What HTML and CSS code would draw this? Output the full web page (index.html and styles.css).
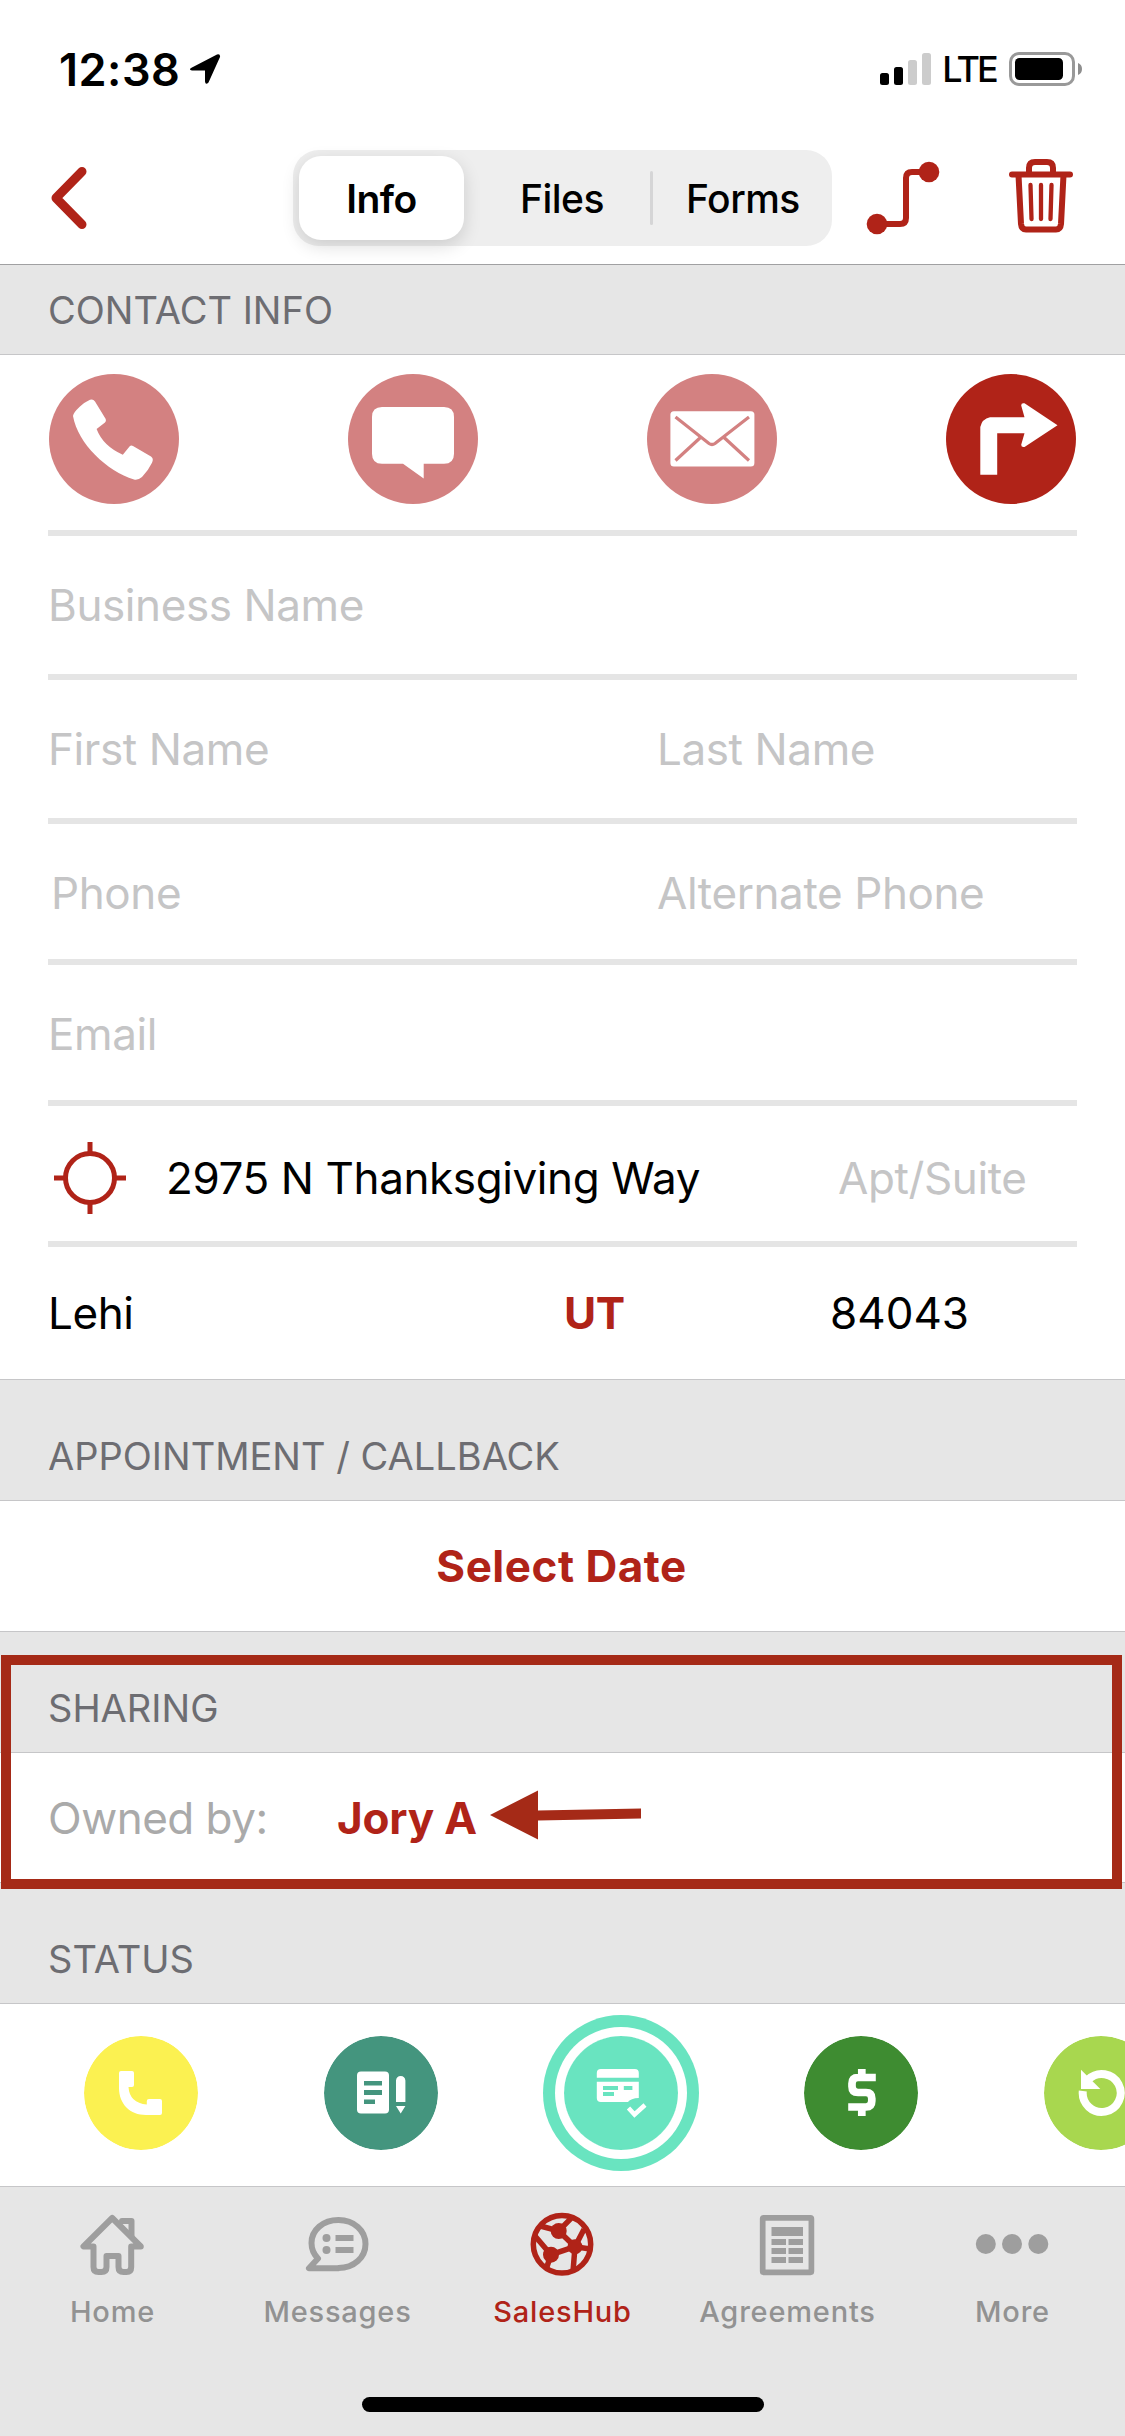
FILE: index.html
```html
<!DOCTYPE html>
<html lang="en">
<head>
<meta charset="utf-8">
<title>Contact</title>
<link rel="stylesheet" href="styles.css">
</head>
<body>
<div class="screen">
  <header class="top">
    <div class="statusbar">
      <div class="clock">
        <span class="time">12:38</span>
        <svg class="location" width="32" height="32" viewBox="0 0 32 32"><path d="M2 15 28 1.500Q31.500 0.500 31 4L19.500 29.500Q16.500 32.500 16 28.500V17.500L3 17.500Q-0.500 16.800 2 15Z"/></svg>
      </div>
      <div class="signals">
        <svg class="bars" width="52" height="34" viewBox="0 0 52 34"><rect x="0" y="21" width="9" height="12" rx="2.500"/><rect x="14" y="15" width="9" height="18" rx="2.500"/><g fill="#ccc"><rect x="28" y="8" width="9" height="25" rx="2.500"/><rect x="42" y="1" width="9" height="32" rx="2.500"/></g></svg>
        <span class="lte">LTE</span>
        <svg width="74" height="34" viewBox="0 0 74 34"><rect x="1.500" y="1.500" width="63" height="31" rx="8.500" fill="none" stroke="#999" stroke-width="3"/><rect x="6" y="6" width="48" height="22" rx="4.500"/><path d="M69 11a6.500 6.500 0 0 1 0 12z" fill="#8e8e8e"/></svg>
      </div>
    </div>
    <nav class="navbar">
      <svg class="back" width="38" height="64" viewBox="0 0 38 64"><path d="M32 5.500 6 32 32 58.500" fill="none" stroke="#b02318" stroke-width="9" stroke-linecap="round" stroke-linejoin="round"/></svg>
      <div class="segments">
        <span class="segment selected">Info</span>
        <span class="segment">Files</span>
        <span class="segment last">Forms</span>
      </div>
      <svg class="route" width="74" height="74" viewBox="0 0 74 74"><path d="M11 63H34Q40 63 40 57V17Q40 11 46 11H63" fill="none" stroke="#b02318" stroke-width="6"/><circle cx="11" cy="63" r="10.300"/><circle cx="63" cy="11" r="10.300"/></svg>
      <svg class="trash" width="64" height="74" viewBox="0 0 64 74" fill="none" stroke="#b02318" stroke-width="6" stroke-linecap="round" stroke-linejoin="round"><path d="M3 15.500H61M20 15V9Q20 3 26 3H38Q44 3 44 9V15"/><path d="M9.500 16 12 65Q12.500 70.500 17 70.500H47Q51.500 70.500 52 65L54.500 16"/><path stroke-width="4.300" d="M21.500 26 22.500 60M32 26V60M42.500 26 41.500 60"/></svg>
    </nav>
  </header>

  <h2 class="heading first">CONTACT INFO</h2>
  <section class="panel contact">
    <div class="actions">
      <svg class="dim" viewBox="0 0 130 130"><circle cx="65" cy="65" r="65"/><path fill="#fff" d="M24 42Q24 39 30.700 32.700 36 28 41 25.800 44 24.500 46 27.500L56.700 45Q57.500 47 56 48.500L47.600 55Q54 72 73.800 80.700L80.500 72.500Q82 71 84 72L102 82.500Q105 84.500 103 88.700 99 97 93 103 89 106.500 85 105.500C58 97 29 70 24 42Z"/></svg>
      <svg class="dim" viewBox="0 0 130 130"><circle cx="65" cy="65" r="65"/><path fill="#fff" d="M34 33H96Q106 33 106 43V79.700Q106 89.700 96 89.700H75.700V104.500L55 89.700H34Q24 89.700 24 79.700V43Q24 33 34 33Z"/></svg>
      <svg class="dim" viewBox="0 0 130 130"><circle cx="65" cy="65" r="65"/><rect x="23.400" y="37.200" width="84" height="55.300" rx="3.500" fill="#fff"/><path fill="none" stroke="#d38181" stroke-width="3.200" d="M28.500 43 62 69.500Q65 71.500 68 69.500L102 43M53.200 63.700 28.500 86.500M77.300 63.700 102 86.500"/></svg>
      <svg class="solid" viewBox="0 0 130 130"><circle cx="65" cy="65" r="65"/><path fill="#fff" d="M34.300 100.700V53Q36 45 44 43.300H78.500L75.200 31.500Q75.200 28.500 78.500 29.300L111.500 51.300 78.500 72.900Q75.200 73.500 75.200 70.700L78.500 59.300H51.200V100.700Z"/></svg>
    </div>
    <div class="row"><span>Business Name</span></div>
    <div class="row split"><span>First Name</span><span>Last Name</span></div>
    <div class="row short split phone"><span class="indent">Phone</span><span>Alternate Phone</span></div>
    <div class="row short email"><span>Email</span></div>
    <div class="row short address">
      <svg width="84" height="72" viewBox="0 0 84 72" fill="none" stroke="#b02318" stroke-width="5"><circle cx="42" cy="36" r="24.500"/><path d="M42 0V12M42 60V72M6 36H18M66 36H78"/></svg>
      <span class="value street">2975 N Thanksgiving Way</span><span class="apt">Apt/Suite</span>
    </div>
    <div class="row city"><span class="value">Lehi</span><span class="state">UT</span><span class="value zip">84043</span></div>
  </section>

  <h2 class="heading">APPOINTMENT / CALLBACK</h2>
  <section class="panel date"><span class="link">Select Date</span></section>

  <div class="sharing">
    <h2 class="heading">SHARING</h2>
    <section class="panel owner"><span class="label">Owned by:</span><span class="link name">Jory A</span></section>
    <div class="highlight"></div>
    <svg class="pointer" width="152" height="50" viewBox="0 0 152 50"><path fill="#a52a17" d="M0 25 48 0.500V20.500L151 18.500V28.500L48 30.500V49.500Z"/></svg>
  </div>

  <h2 class="heading">STATUS</h2>
  <section class="panel statuses">
    <svg class="status" viewBox="0 0 114 114"><circle cx="57" cy="57" r="57" fill="#fbf151"/><path fill="#fff" d="M37 35H48Q50 35 50 37V49Q50 51 48 51H44.500Q45.500 67 62.800 68.500V65Q62.800 63 65 63H76Q78 63 78 65V77Q78 79 76 79H62C46 79 35 68 35 52V37Q35 35 37 35Z"/></svg>
    <svg class="status" viewBox="0 0 114 114"><circle cx="57" cy="57" r="57" fill="#44957e"/><rect x="33" y="35.500" width="32" height="42" rx="4" fill="#fff"/><path fill="#44957e" d="M40 45H58V49.500H40ZM40 54H58V59H40ZM40 63.500H51V68H40Z"/><path fill="#fff" d="M72 66V44.500Q72.500 40 76.700 40T81.400 44.500V66ZM72 70H81.400L76.700 77.500Z"/></svg>
    <svg class="status chosen" viewBox="0 0 114 114"><circle cx="57" cy="57" r="57" fill="#69e4c0"/><rect x="32.800" y="33" width="42" height="33" rx="4" fill="#fff"/><path fill="#69e4c0" d="M32 41.700H75.500V45.700H32ZM39 50H54V54H39ZM59.800 50H68.400V54H59.800ZM39 56H50V60H39ZM63.500 66.500Q67 61.700 76 62V68H63Z"/><path fill="none" stroke="#fff" stroke-width="4.500" d="M64.500 72 70.500 78.500 81 69"/></svg>
    <svg class="status" viewBox="0 0 114 114"><circle cx="57" cy="57" r="57" fill="#3e8c31"/><path fill="none" stroke="#fff" stroke-width="7.700" d="M71.800 41.500H54Q48 41.500 48 47.500V50.500Q48 56.500 54 56.500H62Q67.800 56.500 67.800 62.500V65Q67.800 71 62 71H44.200M57.800 33V41M57.800 72V80"/></svg>
    <svg class="status" viewBox="0 0 114 114"><circle cx="57" cy="57" r="57" fill="#a8d74f"/><path fill="none" stroke="#fff" stroke-width="8" d="M38.800 55A19 19 0 1 0 44.500 43.300"/><path fill="#fff" d="M37 33.700V53H56.300Z"/></svg>
  </section>

  <footer class="tabs">
    <div class="tab">
      <svg viewBox="0 0 72 72" fill="none" stroke="#9e9e9e" stroke-width="6" stroke-linecap="round" stroke-linejoin="round"><path d="M35.200 9 6.500 37.500H16.500V58Q16.500 63 21.500 63H24.500Q29.500 63 29.500 58V47H41.500V58Q41.500 63 46.500 63H49.500Q54.200 63 54.200 58V37.500H63.800Z"/><path d="M45 12H54.500V27"/></svg>
      <span>Home</span>
    </div>
    <div class="tab">
      <svg viewBox="0 0 72 72"><path fill="none" stroke="#9e9e9e" stroke-width="6" stroke-linejoin="round" d="M36.500 59C52 59 63.500 48.500 63.500 35S52 11 36.500 11 9.500 21 9.500 34Q9.500 43 16 49.500L7 59.300H36.500Z"/><circle cx="24.500" cy="29" r="4"/><circle cx="24.500" cy="41" r="4"/><path d="M33.500 26H51.500V32H33.500ZM33.500 38H51.500V44H33.500Z"/></svg>
      <span>Messages</span>
    </div>
    <div class="tab active">
      <svg viewBox="0.500 0 72 72"><g fill="none" stroke="#b02318" stroke-width="5.500"><circle cx="35.500" cy="35.300" r="28.700"/><path d="M13.800 17 32.200 22 44.500 9.300M32.200 22 48.500 37.700 24.500 45.700 8.500 27M24.500 45.700 20 59M57.500 20.300 48.500 37.700 63.500 40M48.500 37.700 46.500 62.700"/></g><circle cx="32.200" cy="22" r="8"/><circle cx="24.500" cy="45.700" r="8"/><circle cx="48.500" cy="37.700" r="7.500"/></svg>
      <span>SalesHub</span>
    </div>
    <div class="tab">
      <svg viewBox="0 0 72 72"><rect x="10.700" y="8.800" width="48.700" height="54.500" rx="1" fill="none" stroke="#9e9e9e" stroke-width="5.700"/><path d="M19.500 18H51V27H19.500ZM19.500 30H34V36H19.500ZM36.500 30H51V36H36.500ZM19.500 39H34V45H19.500ZM36.500 39H51V45H36.500ZM19.500 48H34V54H19.500ZM36.500 48H51V54H36.500Z"/></svg>
      <span>Agreements</span>
    </div>
    <div class="tab">
      <svg class="dots" viewBox="-4 0 80 72"><circle cx="8.800" cy="35" r="10"/><circle cx="35" cy="35" r="10"/><circle cx="61.300" cy="35" r="10"/></svg>
      <span>More</span>
    </div>
  </footer>
  <div class="home-indicator"></div>
</div>
</body>
</html>
```
FILE: styles.css
```css
* { box-sizing: border-box; }
body { margin: 0; background: #e6e6e6; font-family: Inter, "Liberation Sans", sans-serif; }
svg { display: block; flex: none; }
.screen { width: 1125px; height: 2436px; overflow: hidden; display: flex; flex-direction: column; }

.top { height: 265px; background: #fff; border-bottom: 1px solid #a0a0a2; flex: none; }
.statusbar { height: 138px; padding: 0 42px 0 59px; display: flex; justify-content: space-between; align-items: center; }
.clock, .signals { display: flex; align-items: center; }
.time { font-size: 45px; font-weight: 600; letter-spacing: 0.5px; }
.location { margin-left: 9px; }
.bars { margin-right: 10px; }
.lte { font-size: 36px; font-weight: 500; letter-spacing: -2.8px; margin-right: 13px; }

.navbar { height: 120px; padding: 0 52px 0 50px; display: flex; align-items: center; }
.segments { width: 539px; height: 96px; margin-left: 205px; padding: 6px; border-radius: 26px; background: #eee; display: flex; font-size: 39px; font-weight: 500; letter-spacing: -0.5px; }
.segment { flex: 1; display: flex; align-items: center; justify-content: center; padding-left: 2px; }
.segment.selected { flex: none; width: 165px; margin-right: 8px; padding: 0; background: #fff; border-radius: 22px; box-shadow: 0 6px 18px rgba(0, 0, 0, .14); font-weight: 600; }
.segment.last::before { content: ""; width: 3px; height: 54px; margin-right: 33px; border-radius: 2px; background: #d5d5d6; }
.segment.last { justify-content: flex-start; padding-left: 0; }
.route { margin: 0 0 0 34px; fill: #b02318; overflow: visible; }
.trash { margin: 0 0 4px auto; }

.heading { height: 120px; margin: 0; padding: 31px 0 0 48px; flex: none; display: flex; align-items: center; font-size: 38px; line-height: 46px; font-weight: 400; color: #6d6d72; }
.heading.first { height: 89px; padding-top: 0; }
.panel { background: #fff; border-top: 1px solid #c6c6c8; border-bottom: 1px solid #c6c6c8; flex: none; }

.contact { height: 1026px; padding: 0 48px; }
.actions { height: 181px; padding: 19px 1px 0; border-bottom: 6px solid #e5e5e5; display: flex; justify-content: space-between; }
.actions svg { width: 130px; height: 130px; }
.dim { fill: #d38181; }
.solid { fill: #b02318; }
.row { height: 144px; border-bottom: 6px solid #e5e5e5; display: flex; align-items: center; font-size: 44px; letter-spacing: -0.4px; color: #c5c5c6; }
.row.short { height: 141px; }
.split span { width: 609px; }
.split span + span { width: auto; }
.split .indent { padding-left: 3px; }
.row.phone, .row.email { padding-top: 3px; }
.row.address { padding: 9px 0 0; }
.value { color: #000; }
.street { width: 672px; margin-left: 34px; }
.row.city { height: 132px; border-bottom: 0; }
.city .value:first-child { width: 516px; }
.zip { letter-spacing: 0; }
.state { width: 266px; font-weight: 700; color: #b02318; }

.date { height: 132px; padding-right: 2px; display: flex; align-items: center; justify-content: center; }
.link { font-size: 44px; font-weight: 700; letter-spacing: 0.5px; color: #b02318; }
.link.name { letter-spacing: -0.2px; }
.sharing { position: relative; flex: none; }
.owner { height: 131px; padding-left: 48px; display: flex; align-items: center; }
.label { width: 289px; font-size: 44px; letter-spacing: -0.5px; color: #aaa; }
.highlight { position: absolute; left: 1px; top: 23px; width: 1121px; height: 234px; border: 10px solid #a52a17; }
.pointer { position: absolute; left: 490px; top: 158px; }

.statuses { height: 184px; padding: 32px 0 0 84px; display: flex; gap: 126px; overflow: hidden; }
.status { width: 114px; height: 114px; border-radius: 50%; }
.chosen { box-shadow: 0 0 0 9px #fff, 0 0 0 21px #69e4c0; }

.tabs { height: 210px; padding-top: 22px; display: flex; flex: none; }
.tab { width: 225px; display: flex; flex-direction: column; align-items: center; gap: 13px; font-size: 29px; line-height: 36px; font-weight: 500; letter-spacing: 0.8px; color: #929292; fill: #9e9e9e; }
.tab svg { width: 72px; height: 72px; }
.tab svg.dots { width: 80px; }
.tab.active { color: #b02318; fill: #b02318; }
.home-indicator { width: 402px; height: 15px; margin: 0 auto; border-radius: 8px; background: #000; flex: none; }
```
